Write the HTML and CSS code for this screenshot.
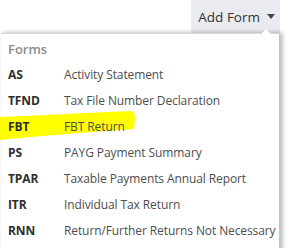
FILE: index.html
```html
<!DOCTYPE html>
<html lang="en-AU">
<head>
    <title>Add Form</title>
    <link rel="stylesheet" href="styles.css">
</head>
<body>

    <div class="toolbar">
        <button class="add-form" type="button">Add Form <span class="add-form__caret"></span></button>
    </div>

    <div class="menu">
        <div class="menu__notch"></div>
        <div class="menu__header">Forms</div>
        <ul class="menu__list">
            <li class="menu__item"><span class="menu__code">AS</span><span class="menu__name">Activity Statement</span></li>
            <li class="menu__item"><span class="menu__code">TFND</span><span class="menu__name">Tax File Number Declaration</span></li>
            <li class="menu__item menu__item--marked">
                <svg class="marker" width="136" height="30" viewBox="0 0 136 30">
                    <path d="M0 6 C30 5 80 2 130 0 C134 0 135 3 135 8 L134 18 C90 21 40 25 0 29 Z" fill="#ffff00"/>
                </svg>
                <span class="menu__code">FBT</span><span class="menu__name">FBT Return</span>
            </li>
            <li class="menu__item"><span class="menu__code">PS</span><span class="menu__name">PAYG Payment Summary</span></li>
            <li class="menu__item"><span class="menu__code">TPAR</span><span class="menu__name">Taxable Payments Annual Report</span></li>
            <li class="menu__item"><span class="menu__code">ITR</span><span class="menu__name">Individual Tax Return</span></li>
            <li class="menu__item"><span class="menu__code">RNN</span><span class="menu__name">Return/Further Returns Not Necessary</span></li>
        </ul>
    </div>

</body>
</html>
```

FILE: styles.css
```css
* {
    box-sizing: border-box;
}

body {
    margin: 0;
    padding: 0;
    background-color: #fff;
    font-family: "Open Sans", sans-serif;
    overflow: hidden;
}

.toolbar {
    display: flex;
    justify-content: flex-end;
    height: 33px;
    padding-right: 9px;
}

.add-form {
    display: flex;
    align-items: center;
    gap: 7px;
    height: 33px;
    padding: 0 5px 0 7px;
    border: 0;
    background-color: #e9ebf1;
    color: #333;
    font-family: inherit;
    font-size: 13.5px;
}

.add-form__caret {
    width: 0;
    height: 0;
    border-left: 4px solid transparent;
    border-right: 4px solid transparent;
    border-top: 5px solid #444;
}

.menu {
    position: relative;
    width: 279px;
    height: 220px;
    margin-left: 1px;
    padding-top: 5px;
    background-color: #fff;
    border-top: 1px solid #d6d6d6;
    border-right: 1px solid #c4c4c4;
    box-shadow: 3px 0 4px rgba(0,0,0,0.22), 0 -2px 4px rgba(0,0,0,0.08);
}

.menu__notch {
    position: absolute;
    top: -5px;
    right: 8px;
    width: 0;
    height: 0;
    border-left: 5px solid transparent;
    border-right: 5px solid transparent;
    border-bottom: 5px solid #fff;
}

.menu__header {
    padding-left: 7px;
    margin-bottom: 3px;
    line-height: 20px;
    font-size: 13px;
    font-weight: 600;
    color: #8c8c8c;
}

.menu__list {
    list-style-type: none;
    margin: 0;
    padding: 0;
}

.menu__item {
    position: relative;
    display: flex;
    padding-left: 7px;
    line-height: 26px;
    font-size: 12px;
    letter-spacing: -0.1px;
}

.menu__code {
    position: relative;
    width: 56px;
    font-weight: 700;
    color: #2e2e2e;
}

.menu__name {
    position: relative;
    color: #4d4d4d;
}

.marker {
    position: absolute;
    left: -1px;
    top: -3px;
}
```
